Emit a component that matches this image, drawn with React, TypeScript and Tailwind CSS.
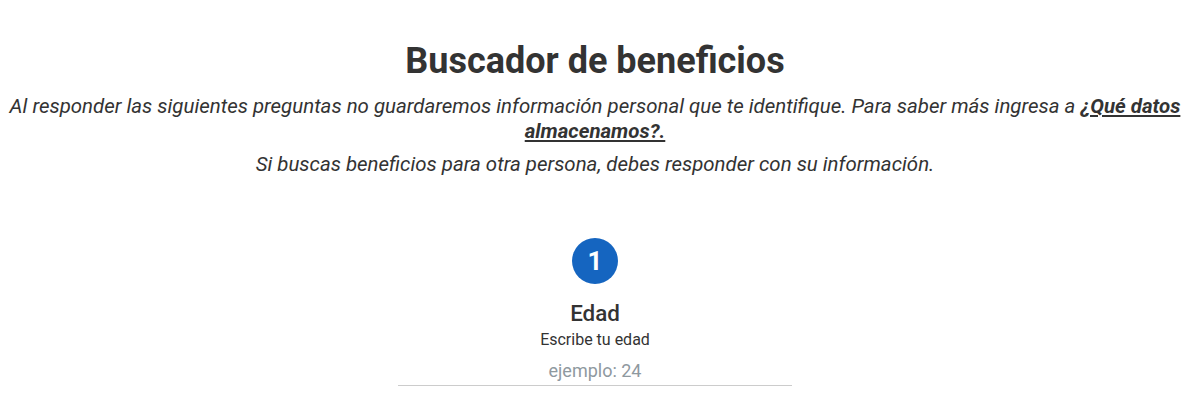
import React from "react";

export default function App() {
  return (
    <div className="w-[1200px] h-[398px] overflow-hidden bg-white text-[#333333]" style={{ fontFamily: "Roboto, 'Noto Sans', sans-serif" }}>
      <div className="w-[1190px] flex flex-col items-center pt-[38px]">
        <h1 className="text-[36px] leading-[46px] font-bold text-[#333333]">Buscador de beneficios</h1>
        <p className="mt-[10px] px-[8px] text-center italic text-[20.45px] leading-[25px]">
          Al responder las siguientes preguntas no guardaremos información personal que te identifique. Para saber más ingresa a{" "}
          <a href="#" className="font-bold underline">¿Qué datos almacenamos?.</a>
        </p>
        <p className="mt-[8px] text-center italic text-[20.45px] leading-[25px]">
          Si buscas beneficios para otra persona, debes responder con su información.
        </p>
        <div className="mt-[61px] flex flex-col items-center">
          <div className="w-[46px] h-[46px] rounded-full bg-[#1565c0] flex items-center justify-center text-white text-[26px] font-bold">1</div>
          <div className="mt-[15px] text-[22.4px] leading-[28px] font-medium">Edad</div>
          <div className="mt-[2px] text-[16px] leading-[22px]">Escribe tu edad</div>
          <input
            placeholder="ejemplo: 24"
            className="mt-[5px] w-[394px] h-[30px] text-center text-[18px] border-b border-[#cccccc] outline-none placeholder:text-[#8f999f]"
          />
        </div>
      </div>
    </div>
  );
}
